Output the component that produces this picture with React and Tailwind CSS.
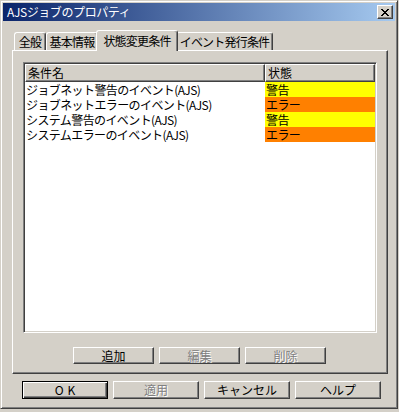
const FONT = { fontFamily: '"Noto Sans CJK JP", "Noto Sans", sans-serif' };

const EVENTS = [
  { name: "ジョブネット警告のイベント(AJS)", status: "警告", color: "bg-[#ffff00]" },
  { name: "ジョブネットエラーのイベント(AJS)", status: "エラー", color: "bg-[#ff8000]" },
  { name: "システム警告のイベント(AJS)", status: "警告", color: "bg-[#ffff00]" },
  { name: "システムエラーのイベント(AJS)", status: "エラー", color: "bg-[#ff8000]" },
];

const raised =
  "border border-t-white border-l-white border-r-[#404040] border-b-[#404040] shadow-[inset_-1px_-1px_#808080]";

function Btn({ children, w, h, disabled, isDefault }) {
  return (
    <div
      className={`flex items-center justify-center bg-[#d4d0c8] text-[12px] leading-none whitespace-nowrap ${w} ${h} ${
        isDefault
          ? "border border-black shadow-[inset_1px_1px_#fff,inset_-1px_-1px_#404040,inset_-2px_-2px_#808080]"
          : raised
      } ${disabled ? "text-[#808080] [text-shadow:1px_1px_#fff]" : "text-black"}`}
    >
      {children}
    </div>
  );
}

function Tab({ label, w, selected }) {
  return (
    <div
      className={`flex items-start justify-center bg-[#d4d0c8] border-t border-l border-t-white border-l-white border-r border-r-[#404040] rounded-t-[3px] shadow-[inset_-1px_0_#808080] text-[12px] leading-none tracking-[-0.8px] whitespace-nowrap text-black ${w} ${
        selected ? "relative z-10 h-[21px] -mb-px -mx-[2px] pt-[4px]" : "h-[18px] pt-[3px]"
      }`}
    >
      {label}
    </div>
  );
}

export default function App() {
  return (
    <div className="w-[399px] h-[412px] bg-[#d4d0c8]" style={FONT}>
      <div className="w-[398px] h-[409px] border border-t-[#d4d0c8] border-l-[#d4d0c8] border-r-[#404040] border-b-[#404040] shadow-[inset_1px_1px_#fff,inset_-1px_-1px_#808080] p-[2px] flex flex-col">
        {/* title bar */}
        <div className="h-[18px] flex items-center justify-between pl-[4px] pr-[2px] bg-[linear-gradient(to_right,#0a246a,#a6caf0)]">
          <span className="text-white text-[12px] leading-none tracking-[-0.4px]">AJSジョブのプロパティ</span>
          <div className={`w-[16px] h-[14px] bg-[#d4d0c8] flex items-center justify-center ${raised}`}>
            <svg width="8" height="7" viewBox="0 0 8 7" shapeRendering="crispEdges">
              <path
                d="M0 0h2v1h1v1h2v-1h1v-1h2v1h-1v1h-1v1h-1v1h1v1h1v1h1v1h-2v-1h-1v-1h-2v1h-1v1h-2v-1h1v-1h1v-1h1v-1h-1v-1h-1v-1h-1z"
                fill="#000"
              />
            </svg>
          </div>
        </div>

        {/* tabs */}
        <div className="mt-[9px] ml-[11px] flex items-end h-[20px]">
          <Tab label="全般" w="w-[32px]" />
          <Tab label="基本情報" w="w-[52px]" />
          <Tab label="状態変更条件" w="w-[82px]" selected />
          <Tab label="イベント発行条件" w="w-[97px]" />
        </div>

        {/* panel */}
        <div className="ml-[9px] w-[376px] h-[324px] border border-t-white border-l-white border-r-[#404040] border-b-[#404040] shadow-[inset_-1px_-1px_#808080] pt-[11px] pl-[10px] flex flex-col">
          <div className="w-[354px] h-[271px] bg-white border border-t-[#808080] border-l-[#808080] border-r-white border-b-white shadow-[inset_1px_1px_#404040,inset_-1px_-1px_#d4d0c8] p-[1px]">
            <div className="flex h-[18px] text-[12px] leading-none">
              <div className={`w-[240px] flex items-center pl-[2px] bg-[#d4d0c8] ${raised}`}>条件名</div>
              <div className={`w-[110px] flex items-center pl-[2px] bg-[#d4d0c8] ${raised}`}>状態</div>
            </div>
            {EVENTS.map((e) => (
              <div key={e.name} className="flex h-[15px] overflow-hidden text-[12px] leading-[15px] tracking-[-0.6px]">
                <div className="w-[240px] pl-[1px] text-black whitespace-nowrap">{e.name}</div>
                <div className={`w-[110px] pl-[1px] text-black ${e.color}`}>{e.status}</div>
              </div>
            ))}
          </div>

          <div className="mt-[14px] flex gap-[5px] ml-[50px]">
            <Btn w="w-[81px]" h="h-[17px]">追加</Btn>
            <Btn w="w-[81px]" h="h-[17px]" disabled>編集</Btn>
            <Btn w="w-[81px]" h="h-[17px]" disabled>削除</Btn>
          </div>
        </div>

        {/* bottom buttons */}
        <div className="mt-[7px] ml-[19px] flex gap-[5px]">
          <Btn w="w-[86px]" h="h-[18px]" isDefault>
            <span className="tracking-[4px] pl-[4px]">OK</span>
          </Btn>
          <Btn w="w-[86px]" h="h-[18px]" disabled>適用</Btn>
          <Btn w="w-[86px]" h="h-[18px]">キャンセル</Btn>
          <Btn w="w-[86px]" h="h-[18px]">ヘルプ</Btn>
        </div>
      </div>
    </div>
  );
}
